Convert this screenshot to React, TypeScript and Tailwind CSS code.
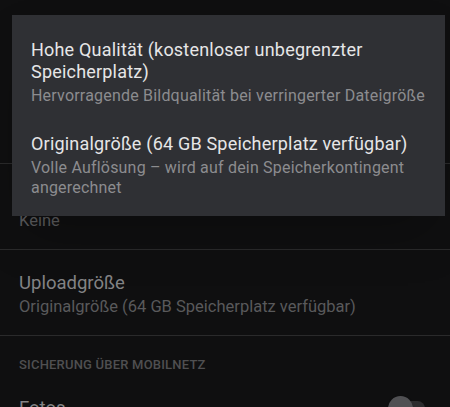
import React from 'react';

const font = { fontFamily: 'Roboto, "Noto Sans", sans-serif' };

const Toggle: React.FC = () => (
  <div className="relative w-[37px] h-[25px] flex items-center">
    <div className="absolute left-[6px] right-0 h-[15px] rounded-full bg-[#2c2c2e]" />
    <div className="absolute left-0 w-[25px] h-[25px] rounded-full bg-[#505053] shadow" />
  </div>
);

const App: React.FC = () => {
  return (
    <div className="relative w-[450px] h-[407px] overflow-hidden bg-[#0f0f10]" style={font}>
      {/* settings list, dimmed by scrim */}
      <div className="flex flex-col">
        <div className="h-[163px]" />
        <div className="border-t border-[#2a2a2b] h-[86px] px-[19px] pt-[22px]">
          <div className="h-[24px]" />
          <div className="text-[16.5px] leading-[22px] text-[#5a5a5c]">Keine</div>
        </div>
        <div className="border-t border-[#2a2a2b] h-[86px] px-[19px] pt-[21px]">
          <div className="text-[18.5px] leading-[24px] text-[#838385]">Uploadgröße</div>
          <div className="text-[16.5px] leading-[24px] text-[#59595b]">Originalgröße (64 GB Speicherplatz verfügbar)</div>
        </div>
        <div className="border-t border-[#2a2a2b] px-[19px] pt-[20px]">
          <div className="text-[13px] leading-[18px] font-medium tracking-[0.2px] text-[#4f4f51]">SICHERUNG ÜBER MOBILNETZ</div>
          <div className="flex items-center justify-between pt-[20px]">
            <div className="text-[18.5px] leading-[24px] text-[#838385]">Fotos</div>
            <div className="mr-[6px] mt-[2px]">
              <Toggle />
            </div>
          </div>
        </div>
      </div>

      {/* dialog */}
      <div className="absolute left-[12px] top-[15px] w-[433px] h-[201px] bg-[#2f3034] shadow-2xl pt-[24px] px-[19px]">
        <div className="flex flex-col gap-[26px]">
          <div>
            <div className="text-[18px] leading-[22px] tracking-[0.2px] text-[#e6e6e7]">
              Hohe Qualität (kostenloser unbegrenzter Speicherplatz)
            </div>
            <div className="text-[16px] leading-[22px] tracking-[0.2px] text-[#8c8c8f] mt-[2px]">
              Hervorragende Bildqualität bei verringerter Dateigröße
            </div>
          </div>
          <div>
            <div className="text-[18px] leading-[22px] tracking-[0.2px] text-[#e6e6e7]">
              Originalgröße (64 GB Speicherplatz verfügbar)
            </div>
            <div className="text-[16px] leading-[20px] tracking-[0.2px] text-[#8c8c8f] mt-[3px] pr-[20px]">
              Volle Auflösung – wird auf dein Speicherkontingent angerechnet
            </div>
          </div>
        </div>
      </div>
    </div>
  );
};

export default App;
